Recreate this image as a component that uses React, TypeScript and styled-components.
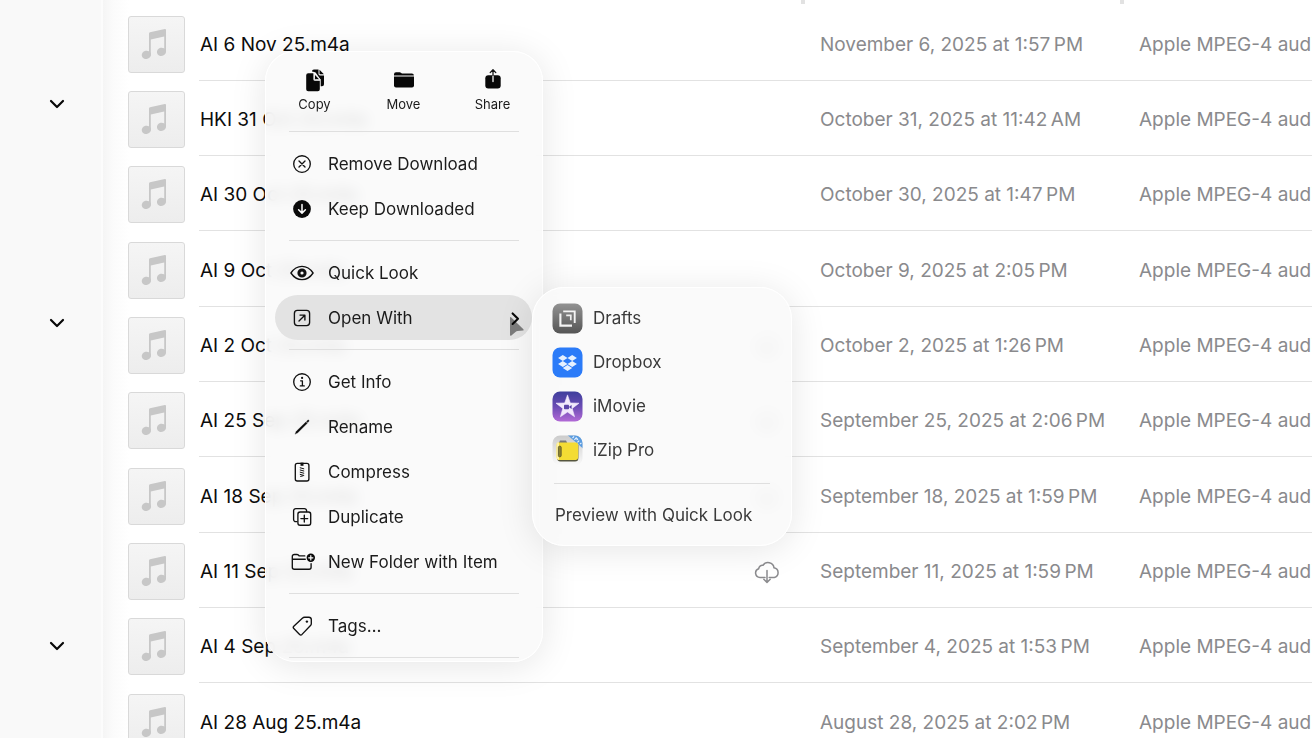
import React from "react";
import styled, { createGlobalStyle, css } from "styled-components";

const GlobalStyle = createGlobalStyle`
  *, *::before, *::after { box-sizing: border-box; }
  body {
    margin: 0;
    background: #ffffff;
    color: #0c0c0c;
    font-family: Inter, "Liberation Sans", sans-serif;
    font-size: 19px;
    font-weight: 400;
    line-height: 24px;
    overflow: hidden;
  }
  button {
    margin: 0;
    padding: 0;
    border: 0;
    background: none;
    color: inherit;
    font: inherit;
    text-align: left;
  }
  svg { display: block; flex: none; }
`;

/* ---------- Page ---------- */

const Page = styled.div`
  position: relative;
  display: flex;
  height: 100vh;
  overflow: hidden;
`;

const Sidebar = styled.aside`
  flex: none;
  width: 103px;
  padding-top: 84px;
  background: #f9f9f9;
  border-right: 2px solid #fcfcfc;
`;

const SidebarSection = styled.section<{ $height: number }>`
  height: ${(p) => p.$height}px;
  padding-left: 36px;
`;

const ToggleButton = styled.button`
  display: grid;
  place-items: center;
  width: 42px;
  height: 40px;
`;

const Content = styled.main`
  flex: 1;
  min-width: 0;
  overflow: hidden;
  padding-left: 25px;
  background: linear-gradient(to right, #f5f5f5 0, #fbfbfb 10px, #ffffff 26px);
`;

const FileTable = styled.table`
  width: 100%;
  table-layout: fixed;
  border-collapse: separate;
  border-spacing: 0;
`;

const HeadCell = styled.th<{ $width?: number }>`
  width: ${(p) => (p.$width ? `${p.$width}px` : "auto")};
  height: 5px;
  padding: 0;
  vertical-align: top;
`;

const ResizeHandle = styled.div`
  width: 4px;
  height: 4px;
  margin-left: auto;
  background: #e2e2e2;
`;

const FileRow = styled.tr`
  height: 75px;
  &:nth-child(3n + 1) {
    height: 76px;
  }
`;

const ThumbCell = styled.td`
  padding: 0;
  vertical-align: middle;
`;

const Cell = styled.td<{ $muted?: boolean }>`
  padding: 4px 0 0 ${(p) => (p.$muted ? 15 : 1)}px;
  border-bottom: 1px solid #e2e2e2;
  color: ${(p) => (p.$muted ? "#8a8a8d" : "#0c0c0c")};
  white-space: nowrap;
  overflow: hidden;
`;

const NameLine = styled.div`
  display: flex;
  align-items: center;
  justify-content: space-between;
  padding-right: 25px;
`;

const Thumb = styled.div`
  width: 57px;
  height: 57px;
  margin-top: 2px;
  border: 1px solid #d9d9d9;
  border-radius: 3px;
  background: linear-gradient(#f5f5f5, #ededed);
`;

/* ---------- Menus ---------- */

const glass = css`
  border: 1px solid #ffffff;
  background: rgba(249, 249, 249, 0.86);
  backdrop-filter: blur(7px);
`;

const ContextMenu = styled.div`
  ${glass}
  position: absolute;
  top: 51px;
  left: 265px;
  width: 278px;
  padding-bottom: 3px;
  border-radius: 30px;
  box-shadow: 0 4px 36px rgba(0, 0, 0, 0.1);
  color: #1b1b1b;
  font-size: 17px;
`;

const Actions = styled.div`
  display: flex;
  padding: 15px 5px 0 4px;
`;

const ActionButton = styled.button`
  flex: 1;
  display: flex;
  flex-direction: column;
  align-items: center;
  gap: 2px;
  font-size: 13px;
  line-height: 18px;
`;

const Divider = styled.hr<{ $first?: boolean }>`
  height: 1px;
  margin: ${(p) => (p.$first ? 18 : 9)}px 23px 9px;
  border: 0;
  background: #dfdfdf;
  &:last-child {
    margin-bottom: 0;
  }
`;

const SubDivider = styled(Divider)`
  margin: 11px 21px 9px;
`;

const MenuItem = styled.button<{ $active?: boolean }>`
  position: relative;
  display: flex;
  align-items: center;
  gap: 13px;
  width: 257px;
  height: 45px;
  margin-left: 9px;
  padding: 0 10px 0 14px;
  border-radius: 23px;
  background: ${(p) => (p.$active ? "#e3e3e3" : "transparent")};
  white-space: nowrap;
`;

const ItemLabel = styled.span`
  flex: 1;
`;

const Submenu = styled.div`
  ${glass}
  position: absolute;
  top: 287px;
  left: 532px;
  width: 260px;
  padding: 8px 0;
  border-radius: 32px;
  box-shadow: 0 4px 36px rgba(0, 0, 0, 0.1);
  color: #3a3a3a;
  font-size: 17px;
`;

const AppItem = styled.button<{ $plain?: boolean }>`
  display: flex;
  align-items: center;
  gap: 10px;
  width: 100%;
  height: 44px;
  padding: 0 ${(p) => (p.$plain ? 22 : 19)}px;
  white-space: nowrap;
`;

const Pointer = styled.svg`
  position: absolute;
  top: 20px;
  right: 6px;
`;

const ChevronSvg = styled.svg`
  position: relative;
`;

/* ---------- Icons ---------- */

const Glyph = ({ children, stroke = 1.35 }: { children: React.ReactNode; stroke?: number }) => (
  <svg width="26" height="26" viewBox="0 0 26 26" fill="none" stroke="#111" strokeWidth={stroke} strokeLinecap="round" strokeLinejoin="round" aria-hidden="true">
    {children}
  </svg>
);

const CopyIcon = () => (
  <Glyph stroke={0.9}>
    <path d="M10 4.6 a2 2 0 0 1 2-2.1 h4.5 v4.6 q0 1.4 1.4 1.4 h4.1 v8.8 a2 2 0 0 1-2 2 h-1.3 v-6.2 q0-.6-.5-1.1 L13.6 5.6 q-.6-.6-1.4-.6z" fill="#080808" stroke="none" />
    <path d="M17.5 2.7 v3.7 q0 .9 .9 .9 h3.5 z" fill="#080808" stroke="none" />
    <path d="M6.2 6.2 h5.2 v6 q0 1.6 1.6 1.6 h4.8 v8.4 a2 2 0 0 1-2 2 H6.2 a2 2 0 0 1-2-2 V8.2 a2 2 0 0 1 2-2z" fill="#080808" stroke="none" />
    <path d="M12.5 7.2 v4.6 q0 .9 .9 .9 h4.4 z" fill="#080808" stroke="#f9f9f9" />
  </Glyph>
);

const FolderIcon = () => (
  <Glyph>
    <path d="M3 8.6 V7.2 A2 2 0 0 1 5 5.2 h3.6 q1 0 1.6 .7 l.8 .7 h9.9 a2 2 0 0 1 2 2 z" fill="#080808" stroke="none" />
    <path d="M3 9.5 h20 v9 a2 2 0 0 1-2 2 H5 a2 2 0 0 1-2-2z" fill="#080808" stroke="none" />
  </Glyph>
);

const ShareIcon = () => (
  <Glyph stroke={1.3}>
    <rect x="5.3" y="8.2" width="15.4" height="13.2" rx="3" fill="#080808" stroke="none" />
    <path d="M13 8 V14.6" stroke="#f9f9f9" />
    <path d="M13 8.4 V3 M10.2 5.6 L13 2.8 15.8 5.6" />
  </Glyph>
);

const RemoveIcon = () => (
  <Glyph>
    <circle cx="13" cy="13" r="8.3" />
    <path d="M10 10 l6 6 M16 10 l-6 6" />
  </Glyph>
);

const KeepIcon = () => (
  <Glyph>
    <circle cx="13" cy="13" r="8.9" fill="#0a0a0a" stroke="none" />
    <path d="M13 8.6 v8.4 M9.6 13.7 L13 17.1 l3.4-3.4" stroke="#fff" strokeWidth="1.5" />
  </Glyph>
);

const EyeIcon = () => (
  <Glyph>
    <path d="M1.9 13 C4.6 9 8.4 6.4 13 6.4 S21.4 9 24.1 13 C21.4 17 17.6 19.6 13 19.6 S4.6 17 1.9 13z" />
    <circle cx="13" cy="13" r="3.1" strokeWidth="3" />
  </Glyph>
);

const OpenIcon = () => (
  <Glyph>
    <rect x="5.4" y="5.4" width="15.2" height="15.2" rx="3" />
    <path d="M10 16 L15.8 10.2 M11 10.1 h4.9 v4.9" />
  </Glyph>
);

const InfoIcon = () => (
  <Glyph>
    <circle cx="13" cy="13" r="8.3" />
    <path d="M11.6 11.8 h1.8 v4.9 M11.3 16.9 h4" strokeWidth="1.3" />
    <circle cx="13.1" cy="8.9" r="1.1" fill="#111" stroke="none" />
  </Glyph>
);

const PencilIcon = () => (
  <Glyph stroke={0.4}>
    <path d="M6.2 19.8 L7.4 17.3 16.9 8 18.2 9.3 8.7 18.7z" fill="#080808" />
    <path d="M17.6 7.3 L18.8 6.2 q.8-.4 1.1 .1 q.3 .5-.1 1 L18.8 8.5z" fill="#080808" />
  </Glyph>
);

const CompressIcon = () => (
  <Glyph>
    <rect x="6.3" y="4.4" width="13.6" height="17.6" rx="2" />
    <path d="M13 3.6 v3.2" strokeWidth="3" strokeLinecap="butt" />
    <path d="M11.2 8.8 l3.6 1 M11.2 11 l3.6 1 M11.2 13.2 l3.6 1 M11.2 15.4 l3.6 1 M11.6 17.4 l2.4-.6" strokeWidth="1" />
  </Glyph>
);

const DuplicateIcon = () => (
  <Glyph>
    <path d="M8 17.6 H6.8 a2.2 2.2 0 0 1-2.2-2.2 V6.8 a2.2 2.2 0 0 1 2.2-2.2 h8.6 a2.2 2.2 0 0 1 2.2 2.2 V7.6" />
    <rect x="8.9" y="8" width="12.8" height="13.2" rx="2.2" />
    <path d="M15.3 11.2 v6.8 M11.9 14.6 h6.8" />
  </Glyph>
);

const NewFolderIcon = () => (
  <Glyph>
    <path d="M22.1 14.6 V18.2 a2 2 0 0 1-2 2 H5.3 a2 2 0 0 1-2-2 V7.5 a2 2 0 0 1 2-2 h2.6 q.9 0 1.5 .6 l.8 .8 h5.6 M3.3 10.2 h13" />
    <circle cx="21.8" cy="8.8" r="4.2" fill="#0a0a0a" stroke="none" />
    <path d="M21.8 6.7 v4.2 M19.7 8.8 h4.2" stroke="#fff" strokeWidth="1.2" />
  </Glyph>
);

const TagIcon = () => (
  <Glyph>
    <path d="M13.6 5 q.8-.8 1.9-.8 h4.4 q2.2 0 2.4 2.2 v4.3 q0 1-.8 1.8 L13 21.4 q-1.2 1.1-2.4 0 L4.8 15.6 q-1.2-1.2 0-2.4z" />
    <circle cx="17.9" cy="8.6" r="1.2" fill="#111" stroke="none" />
  </Glyph>
);

const ChevronDown = () => (
  <svg width="16" height="10" viewBox="0 0 16 10" fill="none" stroke="#080808" strokeWidth="2.2" strokeLinecap="round" strokeLinejoin="round" aria-hidden="true">
    <path d="M2 2 L8 8 14 2" />
  </svg>
);

const ChevronRight = () => (
  <ChevronSvg width="14" height="16" viewBox="0 0 14 16" fill="none" stroke="#080808" strokeWidth="2.1" strokeLinecap="round" strokeLinejoin="round" aria-hidden="true">
    <path d="M4.6 3.4 L10 8.7 4.6 14" />
  </ChevronSvg>
);

const NoteIcon = () => (
  <svg width="55" height="55" viewBox="1 1 55 55" fill="#c7c7c7" aria-hidden="true">
    <path d="M21 17.4 Q21 16.5 22 16.2 L36.8 13.1 Q38 12.9 38 14 V36 h-1.8 V20.6 L22.8 23.4 V38.6 H21z" />
    <ellipse cx="18.4" cy="38.8" rx="4.7" ry="4.1" transform="rotate(-14 18.4 38.8)" />
    <ellipse cx="33.5" cy="35.8" rx="4.6" ry="4.1" transform="rotate(-14 33.5 35.8)" />
  </svg>
);

const CloudIcon = () => (
  <svg width="26" height="24" viewBox="0 0 26 24" fill="none" stroke="#8b8b8e" strokeWidth="1.5" strokeLinecap="round" strokeLinejoin="round" aria-label="In iCloud">
    <path d="M11 17.4 H6 A4.4 4.4 0 0 1 4.7 8.8 A3.7 3.7 0 0 1 9 5.3 A6 6 0 0 1 20 7.8 A4.9 4.9 0 0 1 20.3 17.4 H15.2" />
    <path d="M13 10.4 V22.2 M9.8 19.3 L13 22.4 16.2 19.3" />
  </svg>
);

const DraftsLogo = () => (
  <svg width="31" height="31" viewBox="0 0 31 31" aria-hidden="true">
    <defs>
      <linearGradient id="drafts" x1="0" y1="0" x2="0" y2="1">
        <stop offset="0" stopColor="#929292" />
        <stop offset="1" stopColor="#555" />
      </linearGradient>
    </defs>
    <rect x=".5" y=".5" width="30" height="30" rx="7.5" fill="url(#drafts)" />
    <path d="M11.2 8.4 H22.7 V20" fill="none" stroke="#f4f4f4" strokeWidth="1.9" />
    <path d="M8.4 10.6 V22.6 H20" fill="none" stroke="#f4f4f4" strokeWidth="2.1" />
    <path d="M14.2 12.4 H18.8 V17.2" fill="none" stroke="#eee" strokeWidth="1.7" />
  </svg>
);

const DropboxLogo = () => (
  <svg width="31" height="31" viewBox="0 0 31 31" fill="#e6f1ff" aria-hidden="true">
    <rect x=".5" y=".5" width="30" height="30" rx="7.5" fill="#2b7bf8" />
    <path d="M10.8 8 L15.5 11 10.8 14 6.1 11z M20.2 8 L24.9 11 20.2 14 15.5 11z M10.8 14 L15.5 17 10.8 20 6.1 17z M20.2 14 L24.9 17 20.2 20 15.5 17z M15.5 18.1 L20.2 21.1 15.5 24.1 10.8 21.1z" />
  </svg>
);

const IMovieLogo = () => (
  <svg width="31" height="31" viewBox="0 0 31 31" aria-hidden="true">
    <defs>
      <linearGradient id="imovie" x1="0" y1="0" x2="0" y2="1">
        <stop offset="0" stopColor="#3f3f9c" />
        <stop offset=".5" stopColor="#6a4cb4" />
        <stop offset="1" stopColor="#b26ad6" />
      </linearGradient>
    </defs>
    <rect x=".5" y=".5" width="30" height="30" rx="7.5" fill="url(#imovie)" />
    <path d="M15.5 3.9 L18.3 12 27 12.2 20.2 17.4 22.6 25.8 15.5 21 8.4 25.8 10.8 17.4 4 12.2 12.7 12z" fill="#f1e9fb" stroke="#f1e9fb" strokeWidth=".6" strokeLinejoin="round" />
    <rect x="12" y="13.8" width="5" height="4.4" rx=".8" fill="#5b45a8" />
    <path d="M17.3 15.6 L19.6 14 v4 L17.3 16.6z" fill="#5b45a8" />
  </svg>
);

const IZipLogo = () => (
  <svg width="31" height="31" viewBox="0 0 31 31" aria-hidden="true">
    <defs>
      <linearGradient id="izip" x1="0" y1="0" x2="0" y2="1">
        <stop offset="0" stopColor="#cbcbcb" />
        <stop offset="1" stopColor="#fbfbfb" />
      </linearGradient>
      <clipPath id="izip-tile">
        <rect x=".5" y=".5" width="30" height="30" rx="7.5" />
      </clipPath>
    </defs>
    <g clipPath="url(#izip-tile)">
      <rect width="31" height="31" fill="url(#izip)" />
      <path d="M15.5 0 H31 V13.5z" fill="#5a9ce0" />
      <path d="M20.5 3 l1.6-1.6 M22.4 4.8 l1.8-2 1.4 1.4-1 1 M25.4 7.4 l1.8-1.8 M28 9.2 l1.4-1.4" stroke="#e8f3ff" strokeWidth="1.1" fill="none" />
      <path d="M6.6 8.5 L8 5.6 h6 l1.4 2.6z" fill="#777" />
      <path d="M5 22.5 q0 4 3.5 4 H23 q3.4 0 3.4-3.5 V10 H5z" fill="#56563f" />
      <rect x="4.6" y="7.6" width="21.6" height="17.4" rx="2.4" fill="#f4dc34" />
      <path d="M4.6 9 Q4.6 7.6 6 7.6 h1 V25 Q4.6 25 4.6 22.6z" fill="#fff2a0" />
      <rect x="6.4" y="11.2" width="2.8" height="10.6" rx="1.2" fill="#8a8130" stroke="#55522a" strokeWidth=".8" />
    </g>
  </svg>
);

/* ---------- Data ---------- */

const NNBSP = "\u202f";

const files = [
  { name: "AI 6 Nov 25.m4a", date: "November 6, 2025 at 1:57", half: "PM" },
  { name: "HKI 31 Oct 25.m4a", date: "October 31, 2025 at 11:42", half: "AM" },
  { name: "AI 30 Oct 25.m4a", date: "October 30, 2025 at 1:47", half: "PM" },
  { name: "AI 9 Oct 25.m4a", date: "October 9, 2025 at 2:05", half: "PM" },
  { name: "AI 2 Oct 25.m4a", date: "October 2, 2025 at 1:26", half: "PM", cloud: true },
  { name: "AI 25 Sep 25.m4a", date: "September 25, 2025 at 2:06", half: "PM", cloud: true },
  { name: "AI 18 Sep 25.m4a", date: "September 18, 2025 at 1:59", half: "PM", cloud: true },
  { name: "AI 11 Sep 25.m4a", date: "September 11, 2025 at 1:59", half: "PM", cloud: true },
  { name: "AI 4 Sep 25.m4a", date: "September 4, 2025 at 1:53", half: "PM" },
  { name: "AI 28 Aug 25.m4a", date: "August 28, 2025 at 2:02", half: "PM" },
];

type Entry = { label: string; Icon: () => React.JSX.Element; open?: boolean };

const menuGroups: Entry[][] = [
  [
    { label: "Remove Download", Icon: RemoveIcon },
    { label: "Keep Downloaded", Icon: KeepIcon },
  ],
  [
    { label: "Quick Look", Icon: EyeIcon },
    { label: "Open With", Icon: OpenIcon, open: true },
  ],
  [
    { label: "Get Info", Icon: InfoIcon },
    { label: "Rename", Icon: PencilIcon },
    { label: "Compress", Icon: CompressIcon },
    { label: "Duplicate", Icon: DuplicateIcon },
    { label: "New Folder with Item", Icon: NewFolderIcon },
  ],
  [{ label: "Tags…", Icon: TagIcon }],
];

const actions = [
  { label: "Copy", Icon: CopyIcon },
  { label: "Move", Icon: FolderIcon },
  { label: "Share", Icon: ShareIcon },
];

const apps = [
  { label: "Drafts", Logo: DraftsLogo },
  { label: "Dropbox", Logo: DropboxLogo },
  { label: "iMovie", Logo: IMovieLogo },
  { label: "iZip Pro", Logo: IZipLogo },
];

export default function App() {
  return (
    <Page>
      <GlobalStyle />
      <Sidebar>
        {[219, 323, 60].map((height) => (
          <SidebarSection key={height} $height={height}>
            <ToggleButton type="button" aria-label="Toggle section">
              <ChevronDown />
            </ToggleButton>
          </SidebarSection>
        ))}
      </Sidebar>

      <Content>
        <FileTable>
          <thead>
            <tr>
              <HeadCell $width={71} />
              <HeadCell><ResizeHandle /></HeadCell>
              <HeadCell $width={319}><ResizeHandle /></HeadCell>
              <HeadCell $width={188} />
            </tr>
          </thead>
          <tbody>
            {files.map((f) => (
              <FileRow key={f.name}>
                <ThumbCell>
                  <Thumb><NoteIcon /></Thumb>
                </ThumbCell>
                <Cell>
                  <NameLine>
                    {f.name}
                    {f.cloud && <CloudIcon />}
                  </NameLine>
                </Cell>
                <Cell $muted>{f.date + NNBSP + f.half}</Cell>
                <Cell $muted>Apple MPEG-4 audio</Cell>
              </FileRow>
            ))}
          </tbody>
        </FileTable>
      </Content>

      <ContextMenu role="menu">
        <Actions>
          {actions.map(({ label, Icon }) => (
            <ActionButton key={label} type="button" role="menuitem">
              <Icon />
              {label}
            </ActionButton>
          ))}
        </Actions>
        <Divider $first />
        {menuGroups.map((group) => (
          <React.Fragment key={group[0].label}>
            {group.map(({ label, Icon, open }) => (
              <MenuItem key={label} type="button" role="menuitem" $active={open}>
                <Icon />
                <ItemLabel>{label}</ItemLabel>
                {open && (
                  <>
                    <Pointer width="18" height="22" viewBox="0 0 18 22" aria-hidden="true">
                      <path d="M2 3 Q2 1.4 3.3 2.5 L15.4 14.2 Q16.3 15.4 15 15.6 L9.5 15.9 Q8.6 16 7.8 16.8 L3.4 20.6 Q2 21.4 2 19.8z" fill="#7c7c7c" />
                    </Pointer>
                    <ChevronRight />
                  </>
                )}
              </MenuItem>
            ))}
            <Divider />
          </React.Fragment>
        ))}
      </ContextMenu>

      <Submenu role="menu">
        {apps.map(({ label, Logo }) => (
          <AppItem key={label} type="button" role="menuitem">
            <Logo />
            {label}
          </AppItem>
        ))}
        <SubDivider />
        <AppItem type="button" role="menuitem" $plain>Preview with Quick Look</AppItem>
      </Submenu>
    </Page>
  );
}
